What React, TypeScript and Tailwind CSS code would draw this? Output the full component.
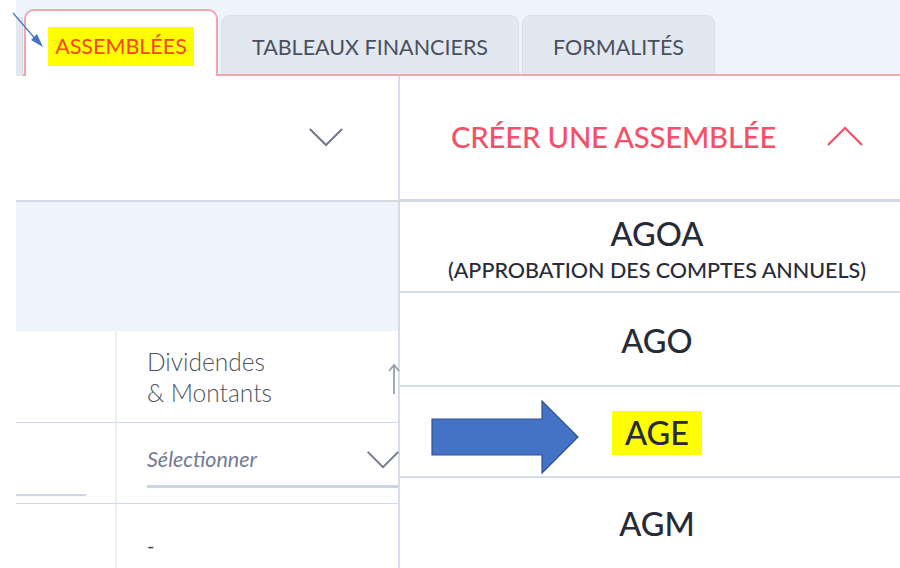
import React from "react";

const Chevron = ({ up, className }: { up?: boolean; className?: string }) => (
  <svg viewBox="0 0 36 20" className={className} fill="none" stroke="currentColor" strokeWidth="2.2">
    {up ? <polyline points="1,19 18,2 35,19" /> : <polyline points="1,1 18,18 35,1" />}
  </svg>
);

export default function App() {
  return (
    <div
      className="relative w-[900px] h-[568px] overflow-hidden bg-white flex"
      style={{ fontFamily: "Lato, 'Open Sans', sans-serif" }}
    >
      <div className="w-[16px] shrink-0 bg-white" />
      <div className="flex-1 flex flex-col">
        {/* Tabs bar */}
        <div className="h-[76px] shrink-0 bg-[#edf4fb] flex items-end border-b-2 border-[#f6a4ae]">
          <div className="w-[7px] h-[59px] -mb-[2px] bg-[#e1e8f0] border-r border-[#d3dbe5]" />
          <div className="ml-[1px] w-[194px] h-[67px] -mb-[2px] bg-white border-2 border-b-0 border-[#f6a4ae] rounded-t-[10px] flex items-center justify-center pt-[6px]">
            <span className="bg-[#ffff00] px-[7px] py-[8px] text-[21.5px] leading-[23px] text-[#f2481c]">
              ASSEMBLÉES
            </span>
          </div>
          <div className="ml-[3px] w-[298px] h-[59px] bg-[#e1e8f0] border border-b-0 border-[#d6dee8] rounded-t-[9px] flex items-center justify-center pt-[5px]">
            <span className="text-[21.5px] text-[#4a4f5e]">TABLEAUX FINANCIERS</span>
          </div>
          <div className="ml-[3px] w-[193px] h-[59px] bg-[#e1e8f0] border border-b-0 border-[#d6dee8] rounded-t-[9px] flex items-center justify-center pt-[5px]">
            <span className="text-[21.5px] text-[#4a4f5e]">FORMALITÉS</span>
          </div>
        </div>

        {/* Body */}
        <div className="flex-1 flex">
          {/* Left panel */}
          <div className="w-[384px] shrink-0 flex flex-col border-r-2 border-[#d6dcea]">
            <div className="h-[126px] shrink-0 flex items-center justify-end pr-[54px] border-b-2 border-[#d3d9e7]">
              <Chevron className="w-[36px] h-[19px] text-[#737a8c] mt-[-2px]" />
            </div>
            <div className="h-[129px] shrink-0 bg-[#edf4fb]" />
            <div className="h-[92px] shrink-0 flex border-b border-[#d3d9e7]">
              <div className="w-[101px] shrink-0 border-r-2 border-[#e9eff8]" />
              <div className="flex-1 flex items-center justify-between pl-[30px] pr-[0px]">
                <div className="text-[24.5px] leading-[31px] text-[#4f5464] font-light mt-[1px]">
                  <div>Dividendes</div>
                  <div>&amp; Montants</div>
                </div>
                <svg viewBox="0 0 12 32" className="w-[12px] h-[32px] text-[#9aa0ae] mt-[4px] mr-[-2px]" fill="none" stroke="currentColor" strokeWidth="1.8">
                  <line x1="6" y1="2" x2="6" y2="31" />
                  <polyline points="1,8 6,2 11,8" />
                </svg>
              </div>
            </div>
            <div className="h-[81px] shrink-0 flex border-b border-[#d3d9e7]">
              <div className="w-[101px] shrink-0 border-r-2 border-[#e9eff8] flex flex-col justify-end pb-[7px]">
                <div className="w-[70px] h-[2px] bg-[#cfd5e2]" />
              </div>
              <div className="flex-1 flex flex-col pl-[30px] pt-[22px]">
                <div className="flex items-center justify-between">
                  <span className="italic text-[21.5px] leading-[28px] text-[#737a92]">Sélectionner</span>
                  <Chevron className="w-[34px] h-[18px] text-[#737a8c] mr-[-2px] mt-[2px]" />
                </div>
                <div className="mt-[12px] h-[3px] bg-[#ced4e2]" />
              </div>
            </div>
            <div className="flex-1 flex">
              <div className="w-[101px] shrink-0 border-r-2 border-[#e9eff8]" />
              <div className="flex-1 pl-[30px] pt-[26px] text-[20px] text-[#3a3f4e]">-</div>
            </div>
          </div>

          {/* Right panel */}
          <div className="flex-1 flex flex-col">
            <div className="h-[126px] shrink-0 flex items-center justify-between pl-[51px] pr-[37px] border-b-[3px] border-[#d3d9e7]">
              <span className="text-[29.3px] font-medium text-[#f5506a] tracking-[-0.2px] mt-[-2px]">CRÉER UNE ASSEMBLÉE</span>
              <Chevron up className="w-[36px] h-[20px] text-[#f5506a] mt-[-4px]" />
            </div>
            <div className="h-[91px] shrink-0 flex flex-col items-center justify-center pl-[14px] pt-[8px] border-b-2 border-[#d6dcea] text-[#272b38]">
              <div className="text-[32.5px] leading-[36px] font-medium mt-[-2px]">AGOA</div>
              <div className="text-[21.5px] leading-[26px] font-medium mt-[5px]">(APPROBATION DES COMPTES ANNUELS)</div>
            </div>
            <div className="h-[94px] shrink-0 flex items-center justify-center pl-[14px] border-b-2 border-[#d6dcea] text-[#272b38]">
              <div className="text-[32.5px] font-medium mt-[4px]">AGO</div>
            </div>
            <div className="h-[91px] shrink-0 flex items-center justify-center pl-[14px] border-b-2 border-[#d6dcea] text-[#272b38]">
              <div className="text-[32.5px] leading-[44px] font-medium bg-[#ffff00] px-[13px] mt-[2px]">AGE</div>
            </div>
            <div className="flex-1 flex items-center justify-center pl-[14px] text-[#272b38]">
              <div className="text-[32.5px] font-medium mt-[2px]">AGM</div>
            </div>
          </div>
        </div>
      </div>

      {/* Annotation: thin arrow */}
      <svg className="absolute left-0 top-0 w-[60px] h-[60px] pointer-events-none" viewBox="0 0 60 60">
        <line x1="13" y1="13" x2="38" y2="42" stroke="#4472c4" strokeWidth="1.2" />
        <polygon points="43,47 31,40 37,34" fill="#4472c4" />
      </svg>

      {/* Annotation: big block arrow */}
      <svg className="absolute left-[431px] top-[400px] w-[149px] h-[75px] pointer-events-none" viewBox="0 0 149 75">
        <polygon
          points="1,19 111,19 111,1 147,37 111,73 111,55 1,55"
          fill="#4472c4"
          stroke="#2f528f"
          strokeWidth="1.2"
        />
      </svg>
    </div>
  );
}
